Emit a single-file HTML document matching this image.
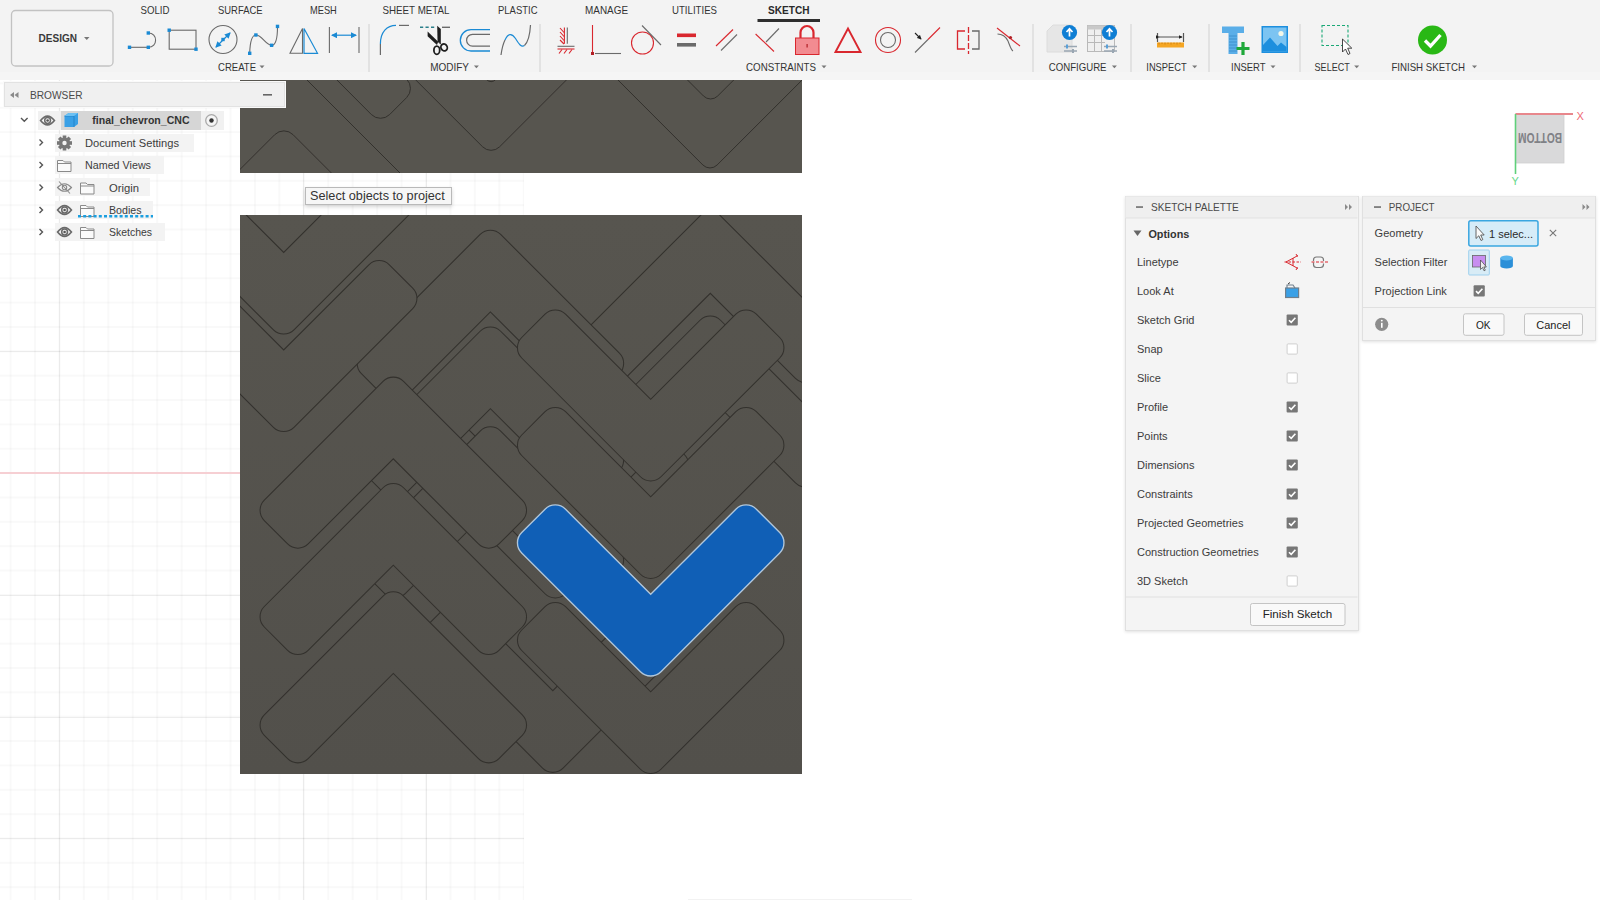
<!DOCTYPE html>
<html><head><meta charset="utf-8">
<style>
*{box-sizing:border-box;margin:0;padding:0}
html,body{width:1600px;height:900px;overflow:hidden;background:#fff;font-family:"Liberation Sans",sans-serif;color:#3c3c3c}
.a{position:absolute}
.t{position:absolute;white-space:nowrap;line-height:1}
#grid{position:absolute;left:0;top:79px;width:524px;height:821px;
background-image:
linear-gradient(to right, rgba(0,0,0,0.022) 1.8px, transparent 1.8px),
linear-gradient(to bottom, rgba(0,0,0,0.022) 1.8px, transparent 1.8px);
background-size:24.44px 24.37px,24.44px 24.37px;
background-position:9.6px 0,0 3.4px}
.mj{position:absolute;background:rgba(0,0,0,0.055)}
#tb{position:absolute;left:0;top:0;width:1600px;height:79.5px;background:linear-gradient(#f3f3f3 0,#f3f3f3 72px,#f5f5f5 72px)}
.tab{position:absolute;top:5px;font-size:10px;color:#3c3c3c;letter-spacing:0.1px}
.grp{position:absolute;top:62px;font-size:10px;color:#3c3c3c}
.sep{position:absolute;top:24px;width:1px;height:48px;background:#d8d8d8}
.dd{display:inline-block;width:0;height:0;border-left:3px solid transparent;border-right:3px solid transparent;border-top:3.5px solid #666;margin-left:5px;vertical-align:2px}
.dark{position:absolute;background:#57544f}
.pan{position:absolute;background:#f4f4f4;border:1px solid #dcdcdc}
.row{position:absolute;font-size:11px;color:#3c3c3c}
.cb{position:absolute;width:12px;height:12px;border-radius:2px}
.cb.on{background:#7a7a7a}
.cb.off{background:#fff;border:1px solid #c8c8c8}
.btn{position:absolute;background:#f8f8f8;border:1px solid #c6c6c6;border-radius:2px;font-size:11.5px;color:#222;text-align:center}
</style></head><body>
<div id="grid"></div>
<div class="mj" style="left:59px;top:79px;width:1px;height:821px"></div>
<div class="mj" style="left:303px;top:79px;width:1px;height:821px"></div>
<div class="mj" style="left:426px;top:79px;width:1px;height:821px"></div>
<div class="mj" style="left:0;top:350.8px;width:524px;height:1px"></div>
<div class="mj" style="left:0;top:594.8px;width:524px;height:1px"></div>
<div class="mj" style="left:0;top:716.5px;width:524px;height:1px"></div>
<div class="mj" style="left:0;top:838.3px;width:524px;height:1px"></div>
<!-- red axis -->
<div class="a" style="left:0;top:472.3px;width:240px;height:1.5px;background:#f6cfd3"></div>

<!-- dark viewport rects -->
<!--CHEV-->
<svg class="a" style="left:0;top:0" width="1600" height="900">
<defs><linearGradient id="gbu" gradientUnits="userSpaceOnUse" x1="0" y1="215" x2="0" y2="774"><stop offset="0" stop-color="#57554f"/><stop offset="1" stop-color="#52504b"/></linearGradient><linearGradient id="gbig" x1="0" y1="0" x2="0" y2="1"><stop offset="0" stop-color="#57554f"/><stop offset="1" stop-color="#52504b"/></linearGradient><clipPath id="cbig"><rect x="240" y="215" width="562" height="559"/></clipPath>
<clipPath id="ctop"><rect x="240" y="79.5" width="562" height="93.5"/></clipPath></defs>
<rect x="240" y="79.5" width="562" height="93.5" fill="#57554f"/>
<rect x="240" y="215" width="562" height="559" fill="url(#gbig)"/>
<g clip-path="url(#ctop)"><path d="M226.00,183.40 L274.71,134.69 A13.00,13.00 0 0 1 293.09,134.69 L341.60,183.20" fill="none" stroke="#33312d" stroke-width="1"/>
<path d="M299.00,72.00 L406.00,179.00" fill="none" stroke="#33312d" stroke-width="1"/>
<path d="M329.00,72.00 L371.33,114.49 A13.00,13.00 0 0 0 389.69,114.51 L406.66,97.54 A13.00,13.00 0 0 0 406.66,79.16 L399.00,71.50" fill="none" stroke="#33312d" stroke-width="1"/>
<path d="M407.80,72.00 L482.61,146.81 A12.00,12.00 0 0 0 499.59,146.81 L574.40,72.00" fill="none" stroke="#33312d" stroke-width="1"/>
<path d="M479.00,72.00 L486.86,79.86 A6.00,6.00 0 0 0 495.34,79.86 L503.20,72.00" fill="none" stroke="#33312d" stroke-width="1"/>
<path d="M610.00,72.00 L702.93,165.03 A10.00,10.00 0 0 0 717.07,165.03 L810.10,72.00" fill="none" stroke="#33312d" stroke-width="1"/>
<path d="M679.50,72.00 L703.53,96.03 A10.00,10.00 0 0 0 717.67,96.03 L741.70,72.00" fill="none" stroke="#33312d" stroke-width="1"/></g>
<g clip-path="url(#cbig)">
<path d="M565.55,593.75 A14.50,14.50 0 0 1 545.05,593.75 L426.30,475.00 A14.50,14.50 0 0 1 426.30,454.50 L449.64,431.16 A14.50,14.50 0 0 1 470.14,431.16 L555.30,516.32 L640.46,431.16 A14.50,14.50 0 0 1 660.96,431.16 L684.30,454.50 A14.50,14.50 0 0 1 684.30,475.00 Z" fill="url(#gbu)" stroke="#33312d" stroke-width="1.05"/>
<path d="M700.05,215.85 A14.50,14.50 0 0 1 720.55,215.85 L839.30,334.60 A14.50,14.50 0 0 1 839.30,355.10 L815.96,378.44 A14.50,14.50 0 0 1 795.46,378.44 L710.30,293.28 L625.14,378.44 A14.50,14.50 0 0 1 604.64,378.44 L581.30,355.10 A14.50,14.50 0 0 1 581.30,334.60 Z" fill="url(#gbu)" stroke="#33312d" stroke-width="1.05"/>
<path d="M700.05,320.25 A14.50,14.50 0 0 1 720.55,320.25 L839.30,439.00 A14.50,14.50 0 0 1 839.30,459.50 L815.96,482.84 A14.50,14.50 0 0 1 795.46,482.84 L710.30,397.68 L625.14,482.84 A14.50,14.50 0 0 1 604.64,482.84 L581.30,459.50 A14.50,14.50 0 0 1 581.30,439.00 Z" fill="url(#gbu)" stroke="#33312d" stroke-width="1.05"/>
<path d="M480.15,234.45 A14.50,14.50 0 0 1 500.65,234.45 L619.40,353.20 A14.50,14.50 0 0 1 619.40,373.70 L596.06,397.04 A14.50,14.50 0 0 1 575.56,397.04 L490.40,311.88 L405.24,397.04 A14.50,14.50 0 0 1 384.74,397.04 L361.40,373.70 A14.50,14.50 0 0 1 361.40,353.20 Z" fill="url(#gbu)" stroke="#33312d" stroke-width="1.05"/>
<path d="M480.15,331.25 A14.50,14.50 0 0 1 500.65,331.25 L619.40,450.00 A14.50,14.50 0 0 1 619.40,470.50 L596.06,493.84 A14.50,14.50 0 0 1 575.56,493.84 L490.40,408.68 L405.24,493.84 A14.50,14.50 0 0 1 384.74,493.84 L361.40,470.50 A14.50,14.50 0 0 1 361.40,450.00 Z" fill="url(#gbu)" stroke="#33312d" stroke-width="1.05"/>
<path d="M480.15,431.05 A14.50,14.50 0 0 1 500.65,431.05 L619.40,549.80 A14.50,14.50 0 0 1 619.40,570.30 L596.06,593.64 A14.50,14.50 0 0 1 575.56,593.64 L490.40,508.48 L405.24,593.64 A14.50,14.50 0 0 1 384.74,593.64 L361.40,570.30 A14.50,14.50 0 0 1 361.40,549.80 Z" fill="url(#gbu)" stroke="#33312d" stroke-width="1.05"/>
<path d="M563.05,768.15 A14.50,14.50 0 0 1 542.55,768.15 L423.80,649.40 A14.50,14.50 0 0 1 423.80,628.90 L447.14,605.56 A14.50,14.50 0 0 1 467.64,605.56 L552.80,690.72 L637.96,605.56 A14.50,14.50 0 0 1 658.46,605.56 L681.80,628.90 A14.50,14.50 0 0 1 681.80,649.40 Z" fill="url(#gbu)" stroke="#33312d" stroke-width="1.05"/>
<path d="M383.05,381.35 A14.50,14.50 0 0 1 403.55,381.35 L522.30,500.10 A14.50,14.50 0 0 1 522.30,520.60 L498.96,543.94 A14.50,14.50 0 0 1 478.46,543.94 L393.30,458.78 L308.14,543.94 A14.50,14.50 0 0 1 287.64,543.94 L264.30,520.60 A14.50,14.50 0 0 1 264.30,500.10 Z" fill="url(#gbu)" stroke="#33312d" stroke-width="1.05"/>
<path d="M383.05,487.75 A14.50,14.50 0 0 1 403.55,487.75 L522.30,606.50 A14.50,14.50 0 0 1 522.30,627.00 L498.96,650.34 A14.50,14.50 0 0 1 478.46,650.34 L393.30,565.18 L308.14,650.34 A14.50,14.50 0 0 1 287.64,650.34 L264.30,627.00 A14.50,14.50 0 0 1 264.30,606.50 Z" fill="url(#gbu)" stroke="#33312d" stroke-width="1.05"/>
<path d="M383.05,596.05 A14.50,14.50 0 0 1 403.55,596.05 L522.30,714.80 A14.50,14.50 0 0 1 522.30,735.30 L498.96,758.64 A14.50,14.50 0 0 1 478.46,758.64 L393.30,673.48 L308.14,758.64 A14.50,14.50 0 0 1 287.64,758.64 L264.30,735.30 A14.50,14.50 0 0 1 264.30,714.80 Z" fill="url(#gbu)" stroke="#33312d" stroke-width="1.05"/>
<path d="M293.95,329.85 A14.50,14.50 0 0 1 273.45,329.85 L154.70,211.10 A14.50,14.50 0 0 1 154.70,190.60 L178.04,167.26 A14.50,14.50 0 0 1 198.54,167.26 L283.70,252.42 L368.86,167.26 A14.50,14.50 0 0 1 389.36,167.26 L412.70,190.60 A14.50,14.50 0 0 1 412.70,211.10 Z" fill="url(#gbu)" stroke="#33312d" stroke-width="1.05"/>
<path d="M293.95,427.35 A14.50,14.50 0 0 1 273.45,427.35 L154.70,308.60 A14.50,14.50 0 0 1 154.70,288.10 L178.04,264.76 A14.50,14.50 0 0 1 198.54,264.76 L283.70,349.92 L368.86,264.76 A14.50,14.50 0 0 1 389.36,264.76 L412.70,288.10 A14.50,14.50 0 0 1 412.70,308.60 Z" fill="url(#gbu)" stroke="#33312d" stroke-width="1.05"/>
<path d="M660.95,476.75 A14.50,14.50 0 0 1 640.45,476.75 L521.70,358.00 A14.50,14.50 0 0 1 521.70,337.50 L545.04,314.16 A14.50,14.50 0 0 1 565.54,314.16 L650.70,399.32 L735.86,314.16 A14.50,14.50 0 0 1 756.36,314.16 L779.70,337.50 A14.50,14.50 0 0 1 779.70,358.00 Z" fill="url(#gbu)" stroke="#33312d" stroke-width="1.05"/>
<path d="M660.95,574.25 A14.50,14.50 0 0 1 640.45,574.25 L521.70,455.50 A14.50,14.50 0 0 1 521.70,435.00 L545.04,411.66 A14.50,14.50 0 0 1 565.54,411.66 L650.70,496.82 L735.86,411.66 A14.50,14.50 0 0 1 756.36,411.66 L779.70,435.00 A14.50,14.50 0 0 1 779.70,455.50 Z" fill="url(#gbu)" stroke="#33312d" stroke-width="1.05"/>
<path d="M660.95,769.25 A14.50,14.50 0 0 1 640.45,769.25 L521.70,650.50 A14.50,14.50 0 0 1 521.70,630.00 L545.04,606.66 A14.50,14.50 0 0 1 565.54,606.66 L650.70,691.82 L735.86,606.66 A14.50,14.50 0 0 1 756.36,606.66 L779.70,630.00 A14.50,14.50 0 0 1 779.70,650.50 Z" fill="url(#gbu)" stroke="#33312d" stroke-width="1.05"/>
<path d="M660.95,671.75 A14.50,14.50 0 0 1 640.45,671.75 L521.70,553.00 A14.50,14.50 0 0 1 521.70,532.50 L545.04,509.16 A14.50,14.50 0 0 1 565.54,509.16 L650.70,594.32 L735.86,509.16 A14.50,14.50 0 0 1 756.36,509.16 L779.70,532.50 A14.50,14.50 0 0 1 779.70,553.00 Z" fill="#105fb6" stroke="#b0c7dc" stroke-width="1.35"/>
</g>
</svg>
<!--/CHEV-->

<!-- toolbar -->
<div id="tb">
<svg class="a" style="left:0;top:0" width="1600" height="79" font-family="Liberation Sans, sans-serif">
<defs>
<marker id="ab" viewBox="0 0 6 6" refX="5" refY="3" markerWidth="5" markerHeight="5" orient="auto-start-reverse"><path d="M0,0 L6,3 L0,6 z" fill="#1a8ad4"/></marker>
<marker id="ak" viewBox="0 0 6 6" refX="5" refY="3" markerWidth="4" markerHeight="4" orient="auto"><path d="M0,0 L6,3 L0,6 z" fill="#222"/></marker>
</defs>
<!-- DESIGN button -->
<rect x="11.5" y="10.5" width="101.5" height="55.5" rx="4" fill="#f4f4f4" stroke="#c2c2c2" stroke-width="1.3"/>
<text x="38.5" y="41.5" font-size="10.5" font-weight="bold" fill="#3a3a3a" textLength="38.5" lengthAdjust="spacingAndGlyphs">DESIGN</text>
<path d="M84,37 h5.5 l-2.75,3 z" fill="#777"/>
<!-- tabs -->
<g font-size="10.5" fill="#333">
<text x="140.5" y="14.3" textLength="29" lengthAdjust="spacingAndGlyphs">SOLID</text>
<text x="218" y="14.3" textLength="44.5" lengthAdjust="spacingAndGlyphs">SURFACE</text>
<text x="310" y="14.3" textLength="26.8" lengthAdjust="spacingAndGlyphs">MESH</text>
<text x="382.5" y="14.3" textLength="67" lengthAdjust="spacingAndGlyphs">SHEET METAL</text>
<text x="498" y="14.3" textLength="39.5" lengthAdjust="spacingAndGlyphs">PLASTIC</text>
<text x="585" y="14.3" textLength="43" lengthAdjust="spacingAndGlyphs">MANAGE</text>
<text x="672" y="14.3" textLength="45" lengthAdjust="spacingAndGlyphs">UTILITIES</text>
<text x="768" y="14.3" font-weight="bold" fill="#2a2a2a" textLength="41.5" lengthAdjust="spacingAndGlyphs">SKETCH</text>
</g>
<rect x="757.5" y="19" width="62.5" height="3" fill="#2e2e2e"/>
<!-- group labels -->
<g font-size="10.5" fill="#333">
<text x="218" y="71" textLength="38" lengthAdjust="spacingAndGlyphs">CREATE</text>
<text x="430.2" y="71" textLength="38.8" lengthAdjust="spacingAndGlyphs">MODIFY</text>
<text x="746" y="71" textLength="70" lengthAdjust="spacingAndGlyphs">CONSTRAINTS</text>
<text x="1048.8" y="71" textLength="57.7" lengthAdjust="spacingAndGlyphs">CONFIGURE</text>
<text x="1146.3" y="71" textLength="40.4" lengthAdjust="spacingAndGlyphs">INSPECT</text>
<text x="1231" y="71" textLength="34.5" lengthAdjust="spacingAndGlyphs">INSERT</text>
<text x="1314.6" y="71" textLength="35.1" lengthAdjust="spacingAndGlyphs">SELECT</text>
<text x="1391.4" y="71" textLength="73.6" lengthAdjust="spacingAndGlyphs">FINISH SKETCH</text>
</g>
<g fill="#777">
<path d="M259.5,65.5 h5 l-2.5,2.8 z"/>
<path d="M473.9,65.5 h5 l-2.5,2.8 z"/>
<path d="M821.5,65.5 h5 l-2.5,2.8 z"/>
<path d="M1111.9,65.5 h5 l-2.5,2.8 z"/>
<path d="M1192.2,65.5 h5 l-2.5,2.8 z"/>
<path d="M1270.5,65.5 h5 l-2.5,2.8 z"/>
<path d="M1354.2,65.5 h5 l-2.5,2.8 z"/>
<path d="M1472,65.5 h5 l-2.5,2.8 z"/>
</g>
<!-- separators -->
<g fill="#d2d2d2">
<rect x="368.5" y="24" width="1" height="48"/>
<rect x="539.5" y="24" width="1" height="48"/>
<rect x="1032.5" y="24" width="1" height="48"/>
<rect x="1130.5" y="24" width="1" height="48"/>
<rect x="1208.5" y="24" width="1" height="48"/>
<rect x="1299.5" y="24" width="1" height="48"/>
</g>
<!-- CREATE icons -->
<g fill="none" stroke="#6a6a6a" stroke-width="1.1">
<path d="M129.5,47.3 H148.3"/>
<path d="M148.3,33 C158,33 158,47.3 148.3,47.3"/>
<rect x="169.2" y="30.2" width="26.8" height="19"/>
<circle cx="223" cy="39.5" r="14"/>
<path d="M249.7,53.3 C250,43 252,35 255.9,35 C262,35 266,45.3 271.6,45.3 C276,45.3 277.5,36 277.5,26.4"/>
<path d="M302.5,28.4 L290,53.3 L302.5,53.3 Z"/>
<path d="M329.4,27 V53 M359,27 V53"/>
</g>
<g fill="none" stroke="#1a8ad4" stroke-width="1.2">
<path d="M216,47 L230,33" marker-start="url(#ab)" marker-end="url(#ab)"/>
<path d="M304,28.5 L317.5,53.3 L304,53.3 Z"/>
<path d="M332,35.2 H356" marker-start="url(#ab)" marker-end="url(#ab)"/>
</g>
<g fill="#1a8ad4">
<rect x="127.8" y="45.6" width="3.4" height="3.4"/><rect x="146.6" y="45.6" width="3.4" height="3.4"/><rect x="146.6" y="31.3" width="3.4" height="3.4"/>
<rect x="167.5" y="28.5" width="3.4" height="3.4"/><rect x="194.3" y="47.5" width="3.4" height="3.4"/>
<rect x="221.3" y="37.8" width="3.4" height="3.4"/>
<rect x="248" y="51.6" width="3.4" height="3.4"/><rect x="254.2" y="33.3" width="3.4" height="3.4"/><rect x="269.9" y="43.6" width="3.4" height="3.4"/><rect x="275.8" y="24.7" width="3.4" height="3.4"/>
</g>
<!-- MODIFY icons -->
<g fill="none" stroke-width="1.2">
<path d="M380.4,44 V55" stroke="#6a6a6a"/>
<path d="M380.4,44 C380.4,32 387,25.4 396,25.4" stroke="#1a8ad4"/>
<path d="M399,25.4 H409" stroke="#6a6a6a"/>
<path d="M420,27.3 H435.5" stroke="#2a7f8a" stroke-width="1.4" stroke-dasharray="3.2,2.3"/>
<path d="M442,27.3 H450" stroke="#6a6a6a" stroke-width="1.4"/>
<path d="M490,29.6 H471 A10.7,10.7 0 0 0 471,51 H490" stroke="#1a8ad4" stroke-width="1.3"/>
<path d="M490,34.3 H472.5 A5.9,5.9 0 0 0 472.5,46.1 H490" stroke="#6a6a6a" stroke-width="1.2"/>
<path d="M501,55 C502,48 503,44 505,40" stroke="#6a6a6a"/>
<path d="M505,40 C508,33 512,33 515.5,38.5 C519,44 521,47.5 524.5,45.5" stroke="#1a8ad4"/>
<path d="M524.5,45.5 C529,41 530,34 530.5,25" stroke="#6a6a6a"/>
</g>
<g fill="#1e1e1e">
<path d="M427.6,31.6 L438.2,41.8 L437,45 L427.6,36.2 Z"/>
<path d="M437.2,25.8 L440.8,29 L440.8,44 L437.6,44 Z"/>
</g>
<circle cx="438.6" cy="43.5" r="1" fill="#f3f3f3"/>
<g fill="none" stroke="#1e1e1e" stroke-width="1.8">
<ellipse cx="436.8" cy="50.2" rx="2.9" ry="4.1"/>
<ellipse cx="444.1" cy="47.4" rx="3.1" ry="3.5" transform="rotate(-30 444.1 47.4)"/>
</g>
<!-- CONSTRAINTS icons -->
<g fill="none" stroke-width="1.1">
<path d="M564.4,27.5 V43.8" stroke="#d9272e"/>
<path d="M567.3,27.5 V43.8" stroke="#6a6a6a"/>
<path d="M560,28 L564,32.5 M560,32 L564,36.5 M560,36 L564,40.5 M560,40 L564,44" stroke="#d9272e"/>
<path d="M557.5,46.3 H574.5" stroke="#6a6a6a"/>
<path d="M557.5,49 H574.5" stroke="#d9272e"/>
<path d="M559,53.5 L562,49.5 M564,53.5 L567,49.5 M569,53.5 L572,49.5" stroke="#d9272e"/>
<path d="M592.5,25 V53" stroke="#d9272e"/>
<path d="M595,53.5 H621" stroke="#6a6a6a"/>
<circle cx="642.5" cy="43" r="11" stroke="#d9272e"/>
<path d="M642,25.5 L661,45" stroke="#6a6a6a"/>
<path d="M716,46 L733,29.5" stroke="#d9272e"/>
<path d="M721,50.5 L737,34.5" stroke="#6a6a6a"/>
<path d="M755.6,34 L774,51.5" stroke="#d9272e"/>
<path d="M766,42 L779,28.5" stroke="#6a6a6a"/>
<path d="M800.5,38 V32.5 A6.5,6.5 0 0 1 813.5,32.5 V38" stroke="#d9272e" stroke-width="2.2"/>
<path d="M835.5,52 L848,28.5 L860.5,52 Z" stroke="#d9272e" stroke-width="1.9"/>
<circle cx="888" cy="40" r="12.5" stroke="#d9272e"/>
<circle cx="888" cy="40" r="7.5" stroke="#6a6a6a"/>
<path d="M915,52.5 L928,39.5" stroke="#6a6a6a"/>
<path d="M928,39.5 L940,27.5" stroke="#d9272e"/>
<path d="M915,33 L921,39" stroke="#222" marker-end="url(#ak)"/>
<path d="M965,31 H957.5 V49 H965" stroke="#d9272e" stroke-width="1.3"/>
<path d="M972,31 H979 V49 H972" stroke="#6a6a6a" stroke-width="1.3"/>
<path d="M968.5,27 V54" stroke="#d9272e" stroke-width="1.3" stroke-dasharray="6,2"/>
<path d="M997,28 L1020,46" stroke="#d9272e"/>
<path d="M997.5,34 C1003,34 1006,37 1008,41 C1010,46 1011,50 1013,51" stroke="#6a6a6a"/>
</g>
<g>
<rect x="677" y="33.5" width="19" height="3.6" fill="#d9272e"/>
<rect x="677" y="43" width="19" height="3.6" fill="#6a6a6a"/>
<rect x="591" y="52" width="3" height="3" fill="#b01f25"/>
<rect x="795.5" y="38" width="23.5" height="16.5" fill="#f28b91" stroke="#d9272e" stroke-width="1"/>
<rect x="806.5" y="44" width="1.2" height="3.5" fill="#b01f25"/>
<circle cx="1010.5" cy="37.5" r="1.6" fill="#b01f25"/>
</g>
<!-- CONFIGURE icons -->
<g>
<path d="M1053,25 H1072 V52 H1047 V31 Z" fill="#e6e6e6" stroke="#dcdcdc"/>
<circle cx="1069.5" cy="32.5" r="7.6" fill="#0f7ed4"/>
<path d="M1069.5,36.5 V29 M1066.5,32 L1069.5,28.8 L1072.5,32" fill="none" stroke="#fff" stroke-width="1.7"/>
<path d="M1064,46.5 H1077 M1064,51 H1077" stroke="#9aa7b3" stroke-width="1.3"/>
<rect x="1066" y="44.5" width="2" height="4" fill="#5aa0d8"/><rect x="1072" y="49" width="2" height="4" fill="#9aa7b3"/>
<rect x="1087.5" y="25.5" width="27" height="26" fill="#f0f0f0" stroke="#b9b9b9"/>
<rect x="1087.5" y="25.5" width="27" height="4" fill="#c9c9c9"/>
<path d="M1087.5,35.5 H1114 M1087.5,42.5 H1105 M1094.5,29.5 V51 M1101.5,29.5 V51" stroke="#b9b9b9" fill="none"/>
<circle cx="1109.5" cy="32.5" r="7.6" fill="#0f7ed4"/>
<path d="M1109.5,36.5 V29 M1106.5,32 L1109.5,28.8 L1112.5,32" fill="none" stroke="#fff" stroke-width="1.7"/>
<path d="M1104,46.5 H1117 M1104,51 H1117" stroke="#9aa7b3" stroke-width="1.3"/>
<rect x="1106" y="44.5" width="2" height="4" fill="#5aa0d8"/><rect x="1112" y="49" width="2" height="4" fill="#9aa7b3"/>
</g>
<!-- INSPECT ruler -->
<g>
<path d="M1157.5,33 V42 M1183.5,33 V42" stroke="#555" stroke-width="1.2"/>
<path d="M1159,37 H1182" stroke="#555" stroke-width="1" marker-start="url(#ak)" marker-end="url(#ak)"/>
<rect x="1157" y="42.5" width="27" height="5" fill="#f5a623"/>
<path d="M1159,42.5 v2 M1162,42.5 v1.5 M1165,42.5 v2 M1168,42.5 v1.5 M1171,42.5 v2 M1174,42.5 v1.5 M1177,42.5 v2 M1180,42.5 v1.5" stroke="#c9780c" stroke-width="0.8"/>
</g>
<!-- INSERT icons -->
<g>
<path d="M1222,26.5 H1244 V33 H1237.5 V54 H1228.5 V33 H1222 Z" fill="#5aaee8"/>
<path d="M1229,36 H1237 M1229,39 H1237 M1229,42 H1237 M1229,45 H1237 M1229,48 H1237 M1229,51 H1237" stroke="#3d8fcc" stroke-width="0.9"/>
<path d="M1243,42 V55 M1236.5,48.5 H1249.5" stroke="#1fa83a" stroke-width="3.2"/>
<rect x="1261.5" y="26" width="26.5" height="27" fill="#1d8fde"/>
<rect x="1263" y="27.5" width="23.5" height="24" fill="#7cc4f2"/>
<path d="M1263,51.5 V45 L1270,37.5 L1277.5,46 L1281,42.5 L1286.5,47 V51.5 Z" fill="#1d8fde"/>
<circle cx="1281" cy="33.5" r="2.6" fill="#f3f7e9"/>
</g>
<!-- SELECT -->
<g>
<rect x="1322" y="25.5" width="26" height="20" fill="none" stroke="#1aa876" stroke-width="1.1" stroke-dasharray="3,2"/>
<path d="M1342.5,39 L1342.5,52 L1345.5,49 L1348,54.5 L1350,53.5 L1347.7,48.2 L1351.8,48.2 Z" fill="#fff" stroke="#333" stroke-width="0.9"/>
</g>
<!-- FINISH -->
<circle cx="1432.5" cy="40" r="14.5" fill="#29b815"/>
<path d="M1425,40.5 L1430.5,46 L1440.5,35" fill="none" stroke="#fff" stroke-width="3.3"/>
</svg>
</div>


<!-- browser -->
<div class="a" style="left:4px;top:82px;width:281px;height:25px;background:#f0f0f0;border:1px solid #e2e2e2;box-shadow:0 0 0 1px #fafafa"></div>
<svg class="a" style="left:0;top:79px" width="300" height="170" font-family="Liberation Sans, sans-serif">
<path d="M12,16 l4,-3 v6 z M16.5,16 l4,-3 v6 z" fill="#8a8a8a" transform="translate(-2,0)"/>
<text x="30" y="20" font-size="11" fill="#4a4a4a" textLength="52.5" lengthAdjust="spacingAndGlyphs">BROWSER</text>
<rect x="263" y="15" width="9" height="1.6" fill="#666"/>
<!-- row backgrounds -->
<rect x="38" y="32" width="186" height="19" fill="#f1f1f1"/>
<rect x="61" y="32" width="140" height="19" fill="#d6d6d6"/>
<rect x="55" y="55" width="139" height="18" fill="#f3f3f3"/>
<rect x="55" y="77" width="109" height="18" fill="#f3f3f3"/>
<rect x="55" y="99" width="95" height="18" fill="#f3f3f3"/>
<rect x="55" y="122" width="98" height="18" fill="#f3f3f3"/>
<rect x="55" y="144" width="110" height="18" fill="#f3f3f3"/>
<!-- arrows -->
<g fill="none" stroke="#555" stroke-width="1.4">
<path d="M21,39 l3.3,3.3 l3.3,-3.3"/>
<path d="M39.5,60.5 l3,3 l-3,3"/>
<path d="M39.5,83 l3,3 l-3,3"/>
<path d="M39.5,105.5 l3,3 l-3,3"/>
<path d="M39.5,128 l3,3 l-3,3"/>
<path d="M39.5,150 l3,3 l-3,3"/>
</g>
<!-- eyes -->
<g id="eye">
<path d="M40.6,41.5 Q47.5,32.8 54.4,41.5 Q47.5,50.2 40.6,41.5 Z" fill="#f3f3f3" stroke="#6a6a6a" stroke-width="1.7"/>
<circle cx="47.6" cy="41.5" r="2.9" fill="none" stroke="#6a6a6a" stroke-width="1.5"/>
<circle cx="47.6" cy="41.5" r="1.3" fill="#555"/>
</g>
<use href="#eye" x="17" y="89.5"/>
<use href="#eye" x="17" y="111.5"/>
<!-- hidden eye -->
<g fill="none" stroke="#8a8a8a" stroke-width="1.1">
<path d="M57.5,108.5 Q64.5,101 71.5,108.5 Q64.5,116 57.5,108.5 Z"/>
<circle cx="64.5" cy="108.5" r="2.2"/>
<path d="M59,102.5 L70,114.5"/>
</g>
<!-- cube -->
<path d="M64.5,37 L68.5,34 H78 V45 L74,48 H64.5 Z" fill="#3aa0e6"/>
<path d="M64.5,37 H74 V48" fill="none" stroke="#1f7fc4" stroke-width="0.8"/>
<path d="M64.5,37 L68.5,34 H78 L74,37 Z" fill="#6cc0f2"/>
<text x="92.3" y="45.2" font-size="11" font-weight="bold" fill="#333" textLength="97.2" lengthAdjust="spacingAndGlyphs">final_chevron_CNC</text>
<circle cx="211.5" cy="41.5" r="5.8" fill="#f5f5f5" stroke="#a9a9a9" stroke-width="1.3"/>
<circle cx="211.5" cy="41.5" r="2.2" fill="#333"/>
<!-- gear -->
<g transform="translate(64.5,64)">
<g fill="#777">
<rect x="-1.8" y="-7.5" width="3.6" height="15"/>
<rect x="-1.8" y="-7.5" width="3.6" height="15" transform="rotate(45)"/>
<rect x="-1.8" y="-7.5" width="3.6" height="15" transform="rotate(90)"/>
<rect x="-1.8" y="-7.5" width="3.6" height="15" transform="rotate(135)"/>
<circle r="5.5"/>
</g>
<circle r="2.2" fill="#f3f3f3"/>
</g>
<!-- folders -->
<g id="fold" fill="#fafafa" stroke="#8a8a8a" stroke-width="1">
<path d="M57.5,81.5 H63 L64.5,83 H71 V92.5 H57.5 Z"/>
<path d="M57.5,84.5 H71" fill="none"/>
</g>
<use href="#fold" x="23" y="22.5"/>
<use href="#fold" x="23" y="45"/>
<use href="#fold" x="23" y="67"/>
<g font-size="11" fill="#3c3c3c">
<text x="85" y="68" textLength="94" lengthAdjust="spacingAndGlyphs">Document Settings</text>
<text x="85" y="90.3" textLength="66" lengthAdjust="spacingAndGlyphs">Named Views</text>
<text x="109" y="112.7" textLength="30" lengthAdjust="spacingAndGlyphs">Origin</text>
<text x="109" y="135" textLength="32.5" lengthAdjust="spacingAndGlyphs">Bodies</text>
<text x="109" y="157.3" textLength="43" lengthAdjust="spacingAndGlyphs">Sketches</text>
</g>
<path d="M78,137.3 L153,137.3" stroke="#1a9fe0" stroke-width="2.6" stroke-dasharray="3,2.2"/>
</svg>
<!-- tooltip -->
<div class="a" style="left:305px;top:186.5px;width:146.5px;height:18.5px;background:#f6f6f6;border:1px solid #b9b9b9;box-shadow:0 2px 4px rgba(0,0,0,0.16)"></div>
<div class="t" style="left:310px;top:189.5px;font-size:12.7px;color:#333">Select objects to project</div>

<!-- sketch palette + project -->
<div class="a" style="left:1124.5px;top:195.5px;width:234px;height:435px;background:#f4f4f4;border:1px solid #e0e0e0;box-shadow:0 1px 3px rgba(0,0,0,0.12)"></div>
<div class="a" style="left:1362px;top:195.5px;width:234px;height:145px;background:#f4f4f4;border:1px solid #e0e0e0;box-shadow:0 1px 3px rgba(0,0,0,0.12)"></div>
<svg class="a" style="left:0;top:0" width="1600" height="700" font-family="Liberation Sans, sans-serif">
<defs>
<g id="cbon"><rect x="0" y="0" width="11.2" height="11.2" rx="1" fill="#777"/><path d="M2.4,5.8 L4.6,8 L8.8,3.4" fill="none" stroke="#fff" stroke-width="1.6"/></g>
<g id="cboff"><rect x="0.5" y="0.5" width="10.2" height="10.2" rx="1" fill="#fff" stroke="#cfcfcf" stroke-width="1"/></g>
</defs>
<!-- sketch palette header -->
<rect x="1125.5" y="196.5" width="232" height="21.5" fill="#efefef"/>
<rect x="1125.5" y="217.5" width="232" height="1" fill="#e2e2e2"/>
<rect x="1136" y="206.3" width="7" height="1.5" fill="#666"/>
<text x="1151" y="211.3" font-size="11" fill="#4a4a4a" textLength="87.8" lengthAdjust="spacingAndGlyphs">SKETCH PALETTE</text>
<path d="M1345,204 l3,3 l-3,3 z M1349,204 l3,3 l-3,3 z" fill="#8a8a8a"/>
<path d="M1133.5,230.5 h8 l-4,5.5 z" fill="#666"/>
<text x="1148.4" y="237.5" font-size="11" font-weight="bold" fill="#333" textLength="41" lengthAdjust="spacingAndGlyphs">Options</text>
<g font-size="11" fill="#3c3c3c">
<text x="1137" y="266">Linetype</text>
<text x="1137" y="295">Look At</text>
<text x="1137" y="324">Sketch Grid</text>
<text x="1137" y="353">Snap</text>
<text x="1137" y="382">Slice</text>
<text x="1137" y="411">Profile</text>
<text x="1137" y="440">Points</text>
<text x="1137" y="469">Dimensions</text>
<text x="1137" y="498">Constraints</text>
<text x="1137" y="527">Projected Geometries</text>
<text x="1137" y="556">Construction Geometries</text>
<text x="1137" y="585">3D Sketch</text>
</g>
<use href="#cbon" x="1286.6" y="314.4"/>
<use href="#cboff" x="1286.6" y="343.4"/>
<use href="#cboff" x="1286.6" y="372.4"/>
<use href="#cbon" x="1286.6" y="401.4"/>
<use href="#cbon" x="1286.6" y="430.4"/>
<use href="#cbon" x="1286.6" y="459.4"/>
<use href="#cbon" x="1286.6" y="488.4"/>
<use href="#cbon" x="1286.6" y="517.4"/>
<use href="#cbon" x="1286.6" y="546.4"/>
<use href="#cboff" x="1286.6" y="575.4"/>
<!-- linetype icons -->
<g fill="none" stroke-width="1">
<path d="M1298,255.5 L1286,262 L1298,268.5" stroke="#d9272e"/>
<path d="M1284.5,262 H1301" stroke="#d9272e" stroke-dasharray="2.5,1.5"/>
<path d="M1293,258 V266 M1296,254 l1.5,2.5 M1296,270 l1.5,-2.5" stroke="#d9272e"/>
<path d="M1316.5,257 h4 a3,3 0 0 1 3,3 v1 M1323.5,263.5 v1 a3,3 0 0 1 -3,3 h-4 a3,3 0 0 1 -3,-3 v-2 M1313.5,261 v-1 a3,3 0 0 1 3,-3" stroke="#777" stroke-width="1.2"/>
<path d="M1311.5,262 H1328" stroke="#d9272e" stroke-dasharray="3,1.5" stroke-width="1.2"/>
</g>
<!-- look at icon -->
<rect x="1285.6" y="288" width="13" height="9.5" fill="#3aa0e6" stroke="#6f7f8c" stroke-width="1.2"/>
<path d="M1287,288 v-3 h6 l2,3" fill="none" stroke="#6f7f8c" stroke-width="1.1"/>
<path d="M1288,284 l2,-1.5" stroke="#333" stroke-width="1"/>
<!-- separator + finish button -->
<rect x="1125.5" y="596.5" width="232" height="1" fill="#e0e0e0"/>
<rect x="1250.5" y="603.5" width="94.5" height="22" rx="2" fill="#f9f9f9" stroke="#c4c4c4"/>
<text x="1262.7" y="618.3" font-size="11.5" fill="#222" textLength="69.6" lengthAdjust="spacingAndGlyphs">Finish Sketch</text>

<!-- project header -->
<rect x="1363" y="196.5" width="232" height="21.5" fill="#efefef"/>
<rect x="1363" y="217.5" width="232" height="1" fill="#e2e2e2"/>
<rect x="1374" y="206.3" width="7" height="1.5" fill="#666"/>
<text x="1388.8" y="211.3" font-size="11" fill="#4a4a4a" textLength="45.8" lengthAdjust="spacingAndGlyphs">PROJECT</text>
<path d="M1582.5,204 l3,3 l-3,3 z M1586.5,204 l3,3 l-3,3 z" fill="#8a8a8a"/>
<g font-size="11" fill="#3c3c3c">
<text x="1374.6" y="237">Geometry</text>
<text x="1374.6" y="266">Selection Filter</text>
<text x="1374.6" y="295">Projection Link</text>
</g>
<rect x="1468.8" y="220.8" width="69.2" height="25.2" rx="2" fill="#d6ecf8" stroke="#3aa6e0" stroke-width="1.5"/>
<path d="M1476,226 V238.5 L1478.8,235.8 L1481,240.5 L1482.8,239.6 L1480.7,235 L1484.2,235 Z" fill="#fafafa" stroke="#555" stroke-width="0.9"/>
<text x="1489" y="237.5" font-size="11.5" fill="#2a2a2a" textLength="44" lengthAdjust="spacingAndGlyphs">1 selec...</text>
<path d="M1549.8,229.8 L1556.2,236.2 M1556.2,229.8 L1549.8,236.2" stroke="#777" stroke-width="1.1"/>
<rect x="1468.7" y="250" width="20.6" height="25" rx="1" fill="#d8ecf6" stroke="#9fd0ee" stroke-width="1"/>
<rect x="1472.5" y="255.5" width="13" height="11.5" fill="#c88ef0" stroke="#666" stroke-width="0.8"/>
<path d="M1480.5,260 V269.5 L1482.5,267.5 L1484,270.8 L1485.3,270.2 L1483.8,266.9 L1486.4,266.9 Z" fill="#eee" stroke="#444" stroke-width="0.7"/>
<path d="M1500.3,258 V266 A6.3,2.6 0 0 0 1512.9,266 V258 Z" fill="#2b8fd8"/>
<ellipse cx="1506.6" cy="258" rx="6.3" ry="2.6" fill="#58b5ee"/>
<use href="#cbon" x="1473.6" y="285.3"/>
<rect x="1363" y="307" width="232" height="1" fill="#e0e0e0"/>
<circle cx="1381.7" cy="324.3" r="6.6" fill="#8d8d8d"/>
<rect x="1381" y="322.8" width="1.6" height="5" fill="#fff"/><circle cx="1381.8" cy="320.6" r="0.95" fill="#fff"/>
<rect x="1463.5" y="313.8" width="40.5" height="21.5" rx="2" fill="#f9f9f9" stroke="#c4c4c4"/>
<text x="1475.9" y="328.5" font-size="11.5" fill="#222" textLength="14.6" lengthAdjust="spacingAndGlyphs">OK</text>
<rect x="1524.5" y="313.8" width="58" height="21.5" rx="2" fill="#f9f9f9" stroke="#c4c4c4"/>
<text x="1536.3" y="328.5" font-size="11.5" fill="#222" textLength="34.2" lengthAdjust="spacingAndGlyphs">Cancel</text>

<!-- view cube -->
<rect x="1515.5" y="114" width="48.5" height="49" fill="#d9d9da" stroke="#cfcfcf" stroke-width="0.8"/>
<text x="0" y="0" font-size="14" font-weight="bold" fill="#808186" transform="translate(1562,133.3) rotate(180)" textLength="44" lengthAdjust="spacingAndGlyphs">BOTTOM</text>
<path d="M1515.5,114 H1573" stroke="#e8878c" stroke-width="1.8"/>
<path d="M1515.5,114 V174" stroke="#5fd07a" stroke-width="1.6"/>
<text x="1576.5" y="119.5" font-size="11" fill="#ef6a76">X</text>
<text x="1511.5" y="184.5" font-size="11" fill="#67d98a">Y</text>
</svg>

<div class="a" style="left:688px;top:898.5px;width:224px;height:1.5px;background:#ececec;border-top:1px solid #f2f2f2"></div>
</body></html>
